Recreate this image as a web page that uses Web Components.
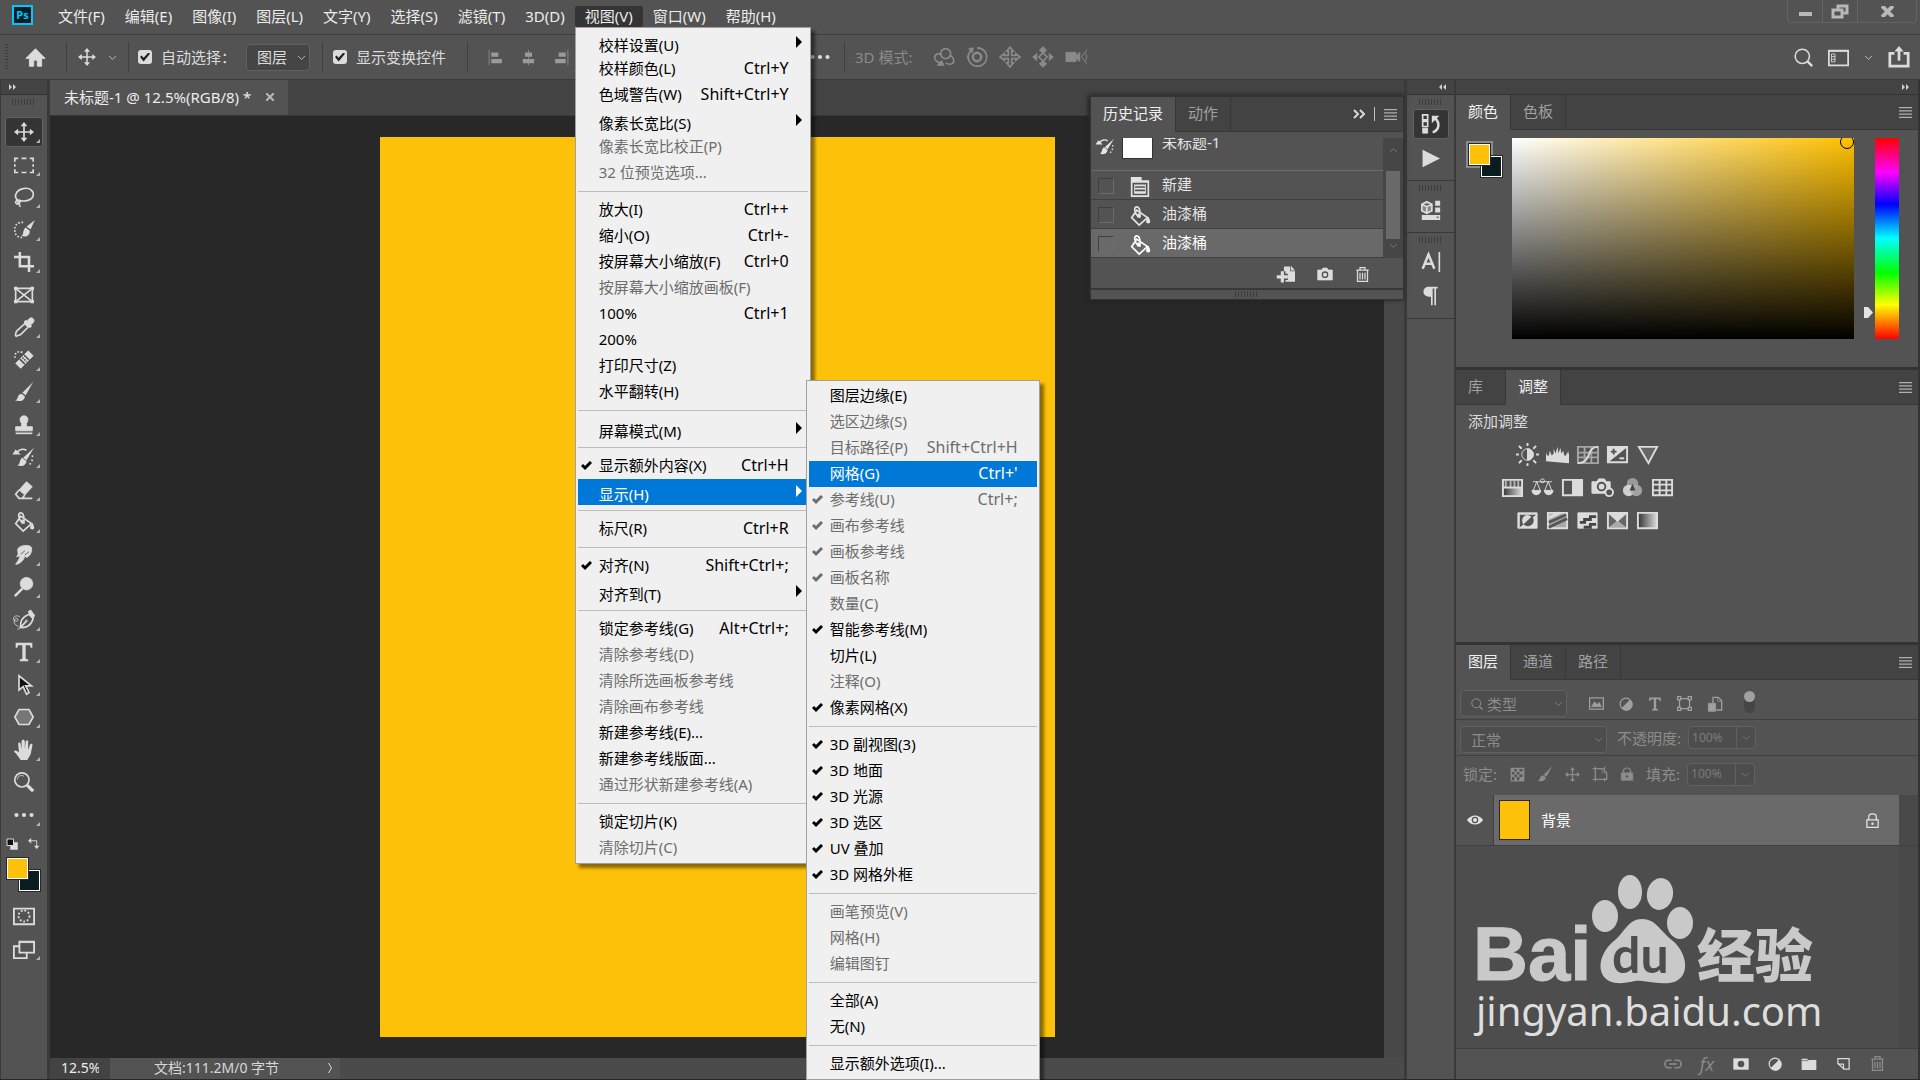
<!DOCTYPE html>
<html lang="zh-CN">
<head>
<meta charset="utf-8">
<title>Photoshop</title>
<style>
    html, body { height: 100%; margin: 0; }
    body {
        background: #282828;
        color: #e4e4e4;
        font: 15px/20px "Noto Sans", "Noto Sans CJK SC", sans-serif;
        overflow: hidden;
    }
</style>
</head>
<body>
<photo-app></photo-app>

<script>
const ICONS = {
    home: `<path fill="currentColor" d="M12 2 1 13h4v9h5v-7h4v7h5v-9h4z"/>`,
    move: `<path d="M12 3v18M3 12h18" stroke-width="2"/><path fill="currentColor" stroke="none" d="m12 0 4 5H8zM12 24l4-5H8zM0 12l5-4v8zM24 12l-5-4v8z"/>`,
    chevron: `<path d="m3 8 9 9 9-9" stroke-width="2"/>`,
    chevronUp: `<path d="m3 16 9-9 9 9" stroke-width="2"/>`,
    chevronRight: `<path d="m9 2 6 10-6 10" stroke-width="2"/>`,
    alignLeft: `<path d="M3 1v22"/><path fill="currentColor" stroke="none" d="M6 5h10v6H6zM6 14h15v6H6z"/>`,
    alignCenter: `<path d="M12 1v22"/><path fill="currentColor" stroke="none" d="M7 5h10v6H7zM4 14h16v6H4z"/>`,
    alignRight: `<path d="M21 1v22"/><path fill="currentColor" stroke="none" d="M8 5h10v6H8zM3 14h15v6H3z"/>`,
    dots: `<g fill="currentColor" stroke="none"><circle cx="3" cy="12" r="2.500"/><circle cx="12" cy="12" r="2.500"/><circle cx="21" cy="12" r="2.500"/></g>`,
    orbit: `<circle cx="14" cy="8" r="6" stroke-width="2"/><path d="M9 9c-6-2-9 1-8 5 1 3 5 5 9 6M19 10c4 2 6 6 4 9-2 2-6 2-9 0" stroke-width="2"/><path fill="currentColor" d="m4 22 5-6 3 6z"/>`,
    roll: `<path d="M5 4a11 11 0 1 0 7-3M1 14v-4" stroke-width="2"/><circle cx="12" cy="12" r="5" stroke-width="3"/><path fill="currentColor" d="m2 2 6-1-2 6z"/>`,
    pan: `<path stroke-width="2" d="m12 0 4 5h-2v5h5V8l5 4-5 4v-2h-5v5h2l-4 5-4-5h2v-5H5v2l-5-4 5-4v2h5V5H8z"/>`,
    slide: `<path d="m12 7 5 5-5 5-5-5z" stroke-width="2"/><path fill="currentColor" stroke="none" d="m12-1 5 5-5 4-5-4zM12 25l5-5-5-4-5 4zM-1 12l6-5v10zM25 12l-6-5v10z"/>`,
    video: `<path fill="currentColor" d="M0 7h11v10H0zM11 11l4-4v10l-4-4z"/><path d="m23 4-6 8 6 8M21 8c2 2 2 6 0 8"/>`,
    search: `<circle cx="10.500" cy="10.500" r="9" stroke-width="2"/><path d="m17 17 6 6" stroke-width="3"/>`,
    workspace: `<path d="M1 4h22v17H1z" stroke-width="2"/><path d="M1 5h22"/><path d="M4 8h4v9H4zM4 11h4M4 14h4"/>`,
    share: `<path d="M7 8H2v14h20V8h-5" stroke-width="3"/><path d="M12 4v12" stroke-width="3"/><path fill="currentColor" stroke="none" d="m12 0 5 6H7z"/>`,
    marquee: `<path d="M1 8V4h4M9 4h6M19 4h4v4M23 11v3M23 17v4h-4M15 21H9M5 21H1v-4M1 14v-3" stroke-width="2"/>`,
    lasso: `<path d="M5 16C-1 12 2 4 11 2c8-2 13 3 12 8-1 6-10 8-17 6" stroke-width="2"/><path d="M5 16c-3 0-4 3-2 4s5-1 4-3-3-1-2 2c1 2 3 3 2 5" stroke-width="2"/>`,
    quick: `<path d="M11 3C4 2 0 7 1 13c0 5 4 8 9 8" stroke-dasharray="2 2" stroke-width="2"/><path fill="currentColor" stroke="none" d="m25 0-5 11-5-3zM14 9l5 4c0 7-6 8-10 6 3-1 1-7 5-10z"/>`,
    crop: `<path d="M7 0v17h17M0 6h18v18" stroke-width="3"/>`,
    frame: `<path d="M2 4h20v16H2z" stroke-width="2"/><path d="m2 4 20 16M22 4 2 20" stroke-width="2"/><path fill="currentColor" stroke="none" d="M0 2h4v4H0zM20 2h4v4h-4zM0 18h4v4H0zM20 18h4v4h-4z"/>`,
    dropper: `<path d="m13 8 4 4-9 9c-2 1-3 1-5 2-1 0-2-1-1-2 0-2 0-3 2-5z" stroke-width="2"/><path fill="currentColor" d="m12 6 2-2 2 1c2-4 5-5 7-3s1 5-3 7l1 2-2 2z"/>`,
    heal: `<path d="M10 3C4 0-1 5 2 11" stroke-dasharray="2 2" stroke-width="2"/><path fill="currentColor" d="m17 1 6 6L8 22l-6-6z"/><g stroke="#535353" stroke-width="2"><path d="m12 6 6 6M7 11l6 6"/><path d="m10 9 5 5" stroke-dasharray="2 1"/></g>`,
    brush: `<path fill="currentColor" stroke="none" d="m23 0-9 16-4-3zM9 14l4 3c0 6-7 7-12 5 5-1 2-7 8-8z"/>`,
    stamp: `<path fill="currentColor" d="M9 10c-3-4-2-9 3-9s6 5 3 9v4h7v5H2v-5h7z"/><path d="M2 22h20" stroke-width="2"/>`,
    history: `<path d="M3 7c4-5 9-5 12-3" stroke-width="2"/><path fill="currentColor" stroke="none" d="m-2 9 4-6 6 6zM24 1l-9 15-4-3zM10 13l5 4c-1 6-7 7-11 5 4-1 2-7 6-9z"/><path d="M22 10c1 5-1 9-5 13" stroke-dasharray="2 3" stroke-width="2"/>`,
    eraser: `<path fill="currentColor" d="m15 2 7 6-9 10-7-6z"/><path d="m6 12-4 5 4 5h4l3-4M6 22h16" stroke-width="2"/>`,
    bucket: `<path d="m8 5 13 9-10 9-9-9zM10 13C4 7 5 1 8 1s4 4 4 8" stroke-width="2"/><path fill="currentColor" stroke="none" d="M9 9h4v5H9zM22 13c3 5 3 8 0 8-4 0-3-4 0-8z"/>`,
    smudge: `<path fill="currentColor" d="M5 4c3-4 14-5 16-1 1 4-1 10-6 12l-2-2c-1 5-4 8-9 10H2c3-4 5-7 5-10l-4 1c4-3 0-7 2-10z"/><path stroke="#535353" d="m8 11 5-4M13 12l5-4"/>`,
    dodge: `<circle cx="15" cy="8" r="7.500" fill="currentColor"/><path d="M10 14 1 23" stroke-width="3"/>`,
    pen: `<path d="M8 21c-1-7 2-13 10-16l5 5c-2 8-8 12-15 11zm0 0 7-8" stroke-width="2"/><circle cx="15" cy="13" r="1"/><path fill="currentColor" d="m17 2 3-2 5 7-3 3z"/><path d="M7 8C1 5-3 10 1 13c4 2 5-3 2-3-4 0-4 7 1 9s3 4 0 4"/>`,
    type: `<path fill="currentColor" stroke="none" d="M2 1h20v6h-2l-1-3h-5v16l3 1v2H7v-2l3-1V4H5L4 7H2z"/>`,
    select: `<path fill="#111" stroke-width="2" d="M6 1v17l5-4 4 9 3-2-4-8h7z"/>`,
    polygon: `<path fill="#777" stroke-width="2" d="m6 3 12 0 5 9-5 9H6l-5-9z"/>`,
    hand: `<path fill="currentColor" stroke="none" d="M8 24c-3-4-5-8-8-10 1-3 4-1 6 1L5 5c0-3 3-2 3 0l1 6V2c0-3 4-3 4 0v9l1-9c1-3 4-2 3 1v9l2-6c1-2 4-2 3 1l-2 10-4 7z"/>`,
    zoom: `<circle cx="9.500" cy="9.500" r="8.500" stroke-width="2"/><path d="M4 9c0-4 4-6 8-4"/><path d="m16 16 7 7" stroke-width="4"/>`,
    mini: `<path fill="currentColor" d="M9 9h14v14H9z"/><path fill="#111" d="M2 2h13v13H2z" stroke-width="2"/>`,
    swap: `<path d="M5 6h14v14" stroke-width="2"/><path fill="currentColor" stroke="none" d="m0 6 7-6v12zM19 24l-6-7h12z"/>`,
    mask: `<path d="M1 4h22v17H1z" stroke-width="2"/><circle cx="12" cy="12" r="6" stroke-dasharray="2 2" stroke-width="2"/>`,
    screen: `<path d="M7 4h16v12H7zM7 9H1v13h14v-5" stroke-width="2"/><path d="M7 5h16"/>`,
    layersUndo: `<path d="M2 1h6v6H2zM2 9h6v6H2z" stroke-width="2"/><path fill="currentColor" d="M2 17h6v6H2z"/><path d="M14 22c8-3 9-11 3-17" stroke-width="3"/><path fill="currentColor" stroke="none" d="M13 2h9l-9 9z"/>`,
    play: `<path fill="currentColor" stroke="none" d="m2 1 22 11L2 23z"/>`,
    cube: `<path fill="#888" stroke-width="2" d="m7 2 6 3v8l-6 3-6-3V5zM1 5l6 3 6-3M7 8v8"/><path fill="currentColor" stroke="none" d="M17 1h6v6h-6zM17 9h6v6h-6zM1 18h22v6H1z"/><path fill="#535353" stroke="none" d="M18 20h4l-2 2z"/>`,
    char: `<path d="m2 20 7-17 7 17M5 14h9" stroke-width="3"/><path d="M22 0v24" stroke-width="2"/>`,
    para: `<path fill="currentColor" stroke="none" d="M3 7c0-4 3-6 6-6h11v2h-6v20h-2V13C6 13 3 11 3 7z"/><path d="M17 2v21" stroke-width="2"/>`,
    doc: `<path fill="currentColor" stroke="none" d="M1 0h13v4h9v20H1z"/><path stroke="#535353" stroke-width="2" d="M4 8h16v13H4zM6 12h12M6 16h12"/>`,
    newDoc: `<path fill="currentColor" stroke="none" d="M10 2h8v6h6v13H10z"/><path fill="currentColor" stroke="none" d="m19 1 5 6h-5z"/><path d="M8 8v14M0 15h15" stroke="#535353" stroke-width="8"/><path d="M8 8v14M1 15h14" stroke-width="4"/>`,
    camera: `<path fill="currentColor" d="M1 6h6l2-3h6l2 3h6v15H1z"/><circle cx="12" cy="13" r="4" stroke="#535353" stroke-width="2"/>`,
    trash: `<path d="M4 6v17h16V6M2 5h20M8 4V1h8v3M8 9v11M12 9v11M16 9v11" stroke-width="2"/>`,
    burger: `<path d="M0 3h24M0 9h24M0 15h24M0 21h24" stroke-width="2"/>`,
    bright: `<circle cx="12" cy="12" r="6"/><path fill="currentColor" d="M12 6a6 6 0 0 1 0 12z"/><path d="M12 0v3M12 21v3M0 12h3M21 12h3M3 3l3 3M18 18l3 3M3 21l3-3M18 6l3-3" stroke-width="2"/>`,
    levels: `<path fill="currentColor" stroke="none" d="M0 19V9l1 4h2l1-5 2 5 2-2V6l2 5 2-7 1 7 2-6 1 6 2-3 1 5h2l1-4 1 3 1-4v13z"/>`,
    curves: `<path opacity=".6" d="M2 4h21v17H2zM9 4v17M16 4v17M2 10h21M2 15h21" stroke-width="2"/><path d="M2 21c15 0 8-17 21-17" stroke-width="2"/>`,
    exposure: `<path d="M2 4h20v16H2z" stroke-width="2"/><path fill="currentColor" d="M2 4h20L2 20z"/><path stroke="#535353" stroke-width="2" d="M5 9h6M8 6v6"/><path d="M14 16h5" stroke-width="2"/>`,
    vibrance: `<path fill="#666" d="M3 4h19l-9 17z" stroke-width="2"/>`,
    hue: `<path fill="url(#g)" d="M2 12h20v9H2z"/><path d="M2 4h20v17H2zM2 12h20" stroke-width="2"/><path d="M5 5v7M10 5v7M14 5v7M18 5v7" stroke-width="2" opacity=".7"/>`,
    balance: `<path d="M2 6h20M6 6 2 16M6 6l4 10M18 6l-4 10M18 6l4 10"/><circle cx="12" cy="5" r="2"/><path fill="currentColor" d="M1 15h9c0 6-9 6-9 0zM14 15h9c0 6-9 6-9 0z"/>`,
    bw: `<path d="M2 4h20v16H2z" stroke-width="2"/><path fill="currentColor" d="M12 4h10v16H12z"/>`,
    photo: `<path fill="currentColor" d="M1 6h5l2-3h6l2 3h4v12H1z"/><circle cx="11" cy="11" r="4" stroke="#535353" stroke-width="2"/><circle cx="19" cy="17" r="4" fill="#535353" stroke-width="2"/>`,
    mixer: `<circle cx="12" cy="8" r="6" fill="#999" stroke="none"/><circle cx="8" cy="15" r="6" fill="#ddd" opacity=".9" stroke="none"/><circle cx="16" cy="15" r="6" fill="#aaa" opacity=".9" stroke="none"/><path fill="#444" stroke="none" d="m12 8 3 7h-6z"/>`,
    lookup: `<path d="M2 4h20v16H2zM9 4v16M16 4v16M2 9h20M2 15h20" stroke-width="2"/>`,
    invert: `<path fill="currentColor" d="M2 20V4h20v16z"/><path fill="#535353" stroke="none" d="M4 6h17L4 19z"/><path fill="currentColor" stroke="none" d="M8 16a5 5 0 0 1 8-8z"/><path fill="#535353" stroke="none" d="M17 8a6 6 0 0 1-9 8z"/>`,
    poster: `<path fill="#aaa" d="M2 4h20v16H2z" stroke-width="2"/><path stroke="#555" d="M3 14 21 6M3 19 22 10" stroke-width="3"/><path d="M3 9 14 4" stroke-width="3"/>`,
    threshold: `<path fill="currentColor" d="M2 4h20v16H2z"/><path stroke="#444" stroke-width="3" d="M4 14h5v-3h6V8h6M8 19h7v-3h6"/>`,
    selective: `<path fill="#666" d="M2 4h20v16H2z" stroke-width="2"/><path fill="#aaa" stroke="none" d="M3 19h18l-9-7z"/><path fill="currentColor" d="M2 4h20L12 13z"/>`,
    gradient: `<path fill="url(#g)" d="M2 4h20v16H2z" stroke-width="2"/>`,
    image: `<path d="M1 3h22v18H1z" stroke-width="2"/><path fill="currentColor" d="m4 17 5-8 4 5 3-4 4 7z"/>`,
    adjust: `<circle cx="12" cy="12" r="10" stroke-width="2"/><path fill="currentColor" d="M19 5A10 10 0 1 1 5 19z"/>`,
    shape: `<path d="M4 4h16v16H4z" stroke-width="2"/><path fill="#535353" stroke-width="2" d="M1 1h5v5H1zM18 1h5v5h-5zM1 18h5v5H1zM18 18h5v5h-5z"/>`,
    smart: `<path d="M9 11V2h8l5 5v14h-8" stroke-width="2"/><path d="M16 2v6h6"/><path fill="currentColor" d="M2 11h11v12H2z"/>`,
    pixels: `<path fill="currentColor" fill-rule="evenodd" stroke="none" d="M1 1h22v22H1zM7 3v4h4V3zM15 3v4h5V3zM3 8v4h4V8zM11 8v4h4V8zM7 12v4h4v-4zM15 12v4h5v-4zM3 16v5h4v-5zM11 16v5h4v-5z"/>`,
    artboard: `<path d="M1 4h15l6 6v10H1M5 1v22M19 1v4M19 18v5" stroke-width="2"/><path d="M15 4v6h7"/>`,
    lock: `<path d="M6 11V7c0-7 12-7 12 0v4" stroke-width="2"/><path fill="currentColor" d="M2 10h20v13H2z"/><circle cx="12" cy="16" r="2" fill="#535353" stroke="none"/>`,
    lockOpen: `<path d="M6 11V6c0-6 12-6 12 0v5M3 11h18v12H3z" stroke-width="2"/><circle cx="12" cy="17" r="2" fill="currentColor" stroke="none"/>`,
    eye: `<path fill="currentColor" stroke="none" d="M0 12C6 3 18 3 24 12 18 21 6 21 0 12z"/><circle cx="12" cy="12" r="5" fill="#535353" stroke="none"/><circle cx="12" cy="12" r="3" fill="currentColor" stroke="none"/>`,
    link: `<path d="M10 7H6a5 5 0 0 0 0 10h4M14 7h4a5 5 0 0 1 0 10h-4M7 12h10" stroke-width="2"/>`,
    addMask: `<path fill="currentColor" d="M1 4h22v16H1z"/><circle cx="12" cy="12" r="5" fill="#535353" stroke="none"/>`,
    folder: `<path fill="currentColor" stroke="none" d="M1 4h9v2h13v15H1z"/><path stroke="#535353" d="M1 7h10"/>`,
    newLayer: `<path d="M3 4h18v17h-8L3 12z" stroke-width="2"/><path d="M3 13h9v8" stroke-width="2"/>`
};

class PsIcon extends HTMLElement {
    constructor(){
        super();
        this.attachShadow({mode: "open"});
    }

    connectedCallback(){
        const size = this.getAttribute("size") || 22;
        this.shadowRoot.innerHTML = `
            <style>
                :host { display: inline-flex; flex: none; }
                svg { display: block; overflow: visible; }
            </style>
            <svg width="${size}" height="${size}" viewBox="0 0 24 24" fill="none" stroke="currentColor" aria-hidden="true">
                <defs><linearGradient id="g"><stop stop-color="#333"/><stop offset="1" stop-color="#ddd"/></linearGradient></defs>
                ${ICONS[this.getAttribute("name")] || ""}
            </svg>`;
    }
}
customElements.define("ps-icon", PsIcon);

/* row of short ticks that marks a draggable edge */
class GripBar extends HTMLElement {
    constructor(){
        super();
        this.attachShadow({mode: "open"}).innerHTML = `
            <style>
                :host {
                    display: block;
                    width: 24px;
                    height: 6px;
                    background: repeating-linear-gradient(90deg, #3c3c3c 0 1px, transparent 1px 3px);
                }
            </style>`;
    }
}
customElements.define("grip-bar", GripBar);

class SwatchPair extends HTMLElement {
    constructor(){
        super();
        this.attachShadow({mode: "open"}).innerHTML = `
            <style>
                :host { display: grid; width: 35px; height: 35px; }
                button {
                    grid-area: 1 / 1;
                    box-sizing: border-box;
                    width: 23px;
                    height: 23px;
                    padding: 0;
                    border: 1px solid #282828;
                    box-shadow: inset 0 0 0 1px #fff;
                }
                .fore { background: #fcc108; z-index: 1; }
                .back { background: #0a1c20; place-self: end; }
                :host([framed]) .fore { outline: 2px solid #8a8a8a; }
                :host([framed]) .back { z-index: 1; clip-path: polygon(11px 0, 100% 0, 100% 100%, 0 100%, 0 11px, 11px 11px); }
            </style>
            <button class="fore" aria-label="foreground"></button>
            <button class="back" aria-label="background"></button>`;
    }
}
customElements.define("swatch-pair", SwatchPair);

class ToolButton extends HTMLElement {
    constructor(){
        super();
        this.attachShadow({mode: "open"});
    }

    connectedCallback(){
        this.shadowRoot.innerHTML = `
            <style>
                :host { display: grid; place-items: center; }
                button {
                    position: relative;
                    display: grid;
                    place-items: center;
                    box-sizing: border-box;
                    width: var(--tool-width, 38px);
                    height: 30px;
                    padding: 0;
                    border: 1px solid transparent;
                    border-radius: 3px;
                    background: none;
                    color: #dcdcdc;
                }
                :host([active]) button { background: #353535; border-color: #616161; }
                :host([more]) button::after {
                    content: "";
                    position: absolute;
                    right: 2px;
                    bottom: 3px;
                    border: 2px solid transparent;
                    border-right-color: #b5b5b5;
                    border-bottom-color: #b5b5b5;
                }
            </style>
            <button aria-label="${this.getAttribute("icon")}"><ps-icon name="${this.getAttribute("icon")}" size="${this.getAttribute("size") || 20}"></ps-icon></button>`;
    }
}
customElements.define("tool-button", ToolButton);

class MenuItem extends HTMLElement {
    constructor(){
        super();
        this.attachShadow({mode: "open"});
    }

    connectedCallback(){
        const off = this.hasAttribute("off") ? "disabled" : "";
        this.shadowRoot.innerHTML = `
            <style>
                :host { display: block; }
                button {
                    display: grid;
                    grid-template-columns: 14px 1fr auto 10px;
                    align-items: center;
                    column-gap: 4px;
                    width: 100%;
                    height: 26px;
                    padding: 0 5px 0 3px;
                    border: 0;
                    background: none;
                    color: #000;
                    font: inherit;
                    text-align: left;
                    white-space: nowrap;
                }
                button:disabled { color: #6d6d6d; }
                :host([active]) button { background: #0078d7; color: #fff; }
                .label, .key { padding-bottom: 2px; }
                :host([sub]) .label { padding: 3px 0 0; }
                .key { font-size: 16px; }
                svg { display: block; }
                .arrow { justify-self: end; }
            </style>
            <button role="menuitem" ${off}>
                <span>${this.hasAttribute("on") ? `<svg width="11" height="10" viewBox="0 0 11 10" fill="none" stroke="currentColor" stroke-width="3"><path d="m1 4 3 3 6-6"/></svg>` : ""}</span>
                <span class="label"><slot></slot></span>
                <span class="key">${this.getAttribute("key") || ""}</span>
                <span class="arrow">${this.hasAttribute("sub") ? `<svg width="7" height="14"><path fill="currentColor" d="m0 0 6 6-6 6z"/></svg>` : ""}</span>
            </button>`;
    }
}
customElements.define("menu-item", MenuItem);

class MenuLine extends HTMLElement {
    constructor(){
        super();
        this.attachShadow({mode: "open"}).innerHTML = `
            <style>
                :host { display: block; padding: 5px 0; }
                div { height: 1px; background: #bdbdbd; }
            </style>
            <div></div>`;
    }
}
customElements.define("menu-line", MenuLine);

class MenuPopup extends HTMLElement {
    constructor(){
        super();
        this.attachShadow({mode: "open"}).innerHTML = `
            <style>
                :host {
                    display: block;
                    box-sizing: border-box;
                    width: 236px;
                    padding: 2px;
                    border: 1px solid #a0a0a0;
                    background: #f0f0f0;
                    box-shadow: 4px 4px 3px rgba(0, 0, 0, 0.45);
                }
            </style>
            <slot></slot>`;
    }
}
customElements.define("menu-popup", MenuPopup);

class MenuBar extends HTMLElement {
    constructor(){
        super();
        this.attachShadow({mode: "open"});
    }

    connectedCallback(){
        const items = ["文件(F)", "编辑(E)", "图像(I)", "图层(L)", "文字(Y)", "选择(S)", "滤镜(T)", "3D(D)", "视图(V)", "窗口(W)", "帮助(H)"];
        this.shadowRoot.innerHTML = `
            <style>
                :host {
                    display: flex;
                    align-items: flex-start;
                    height: 34px;
                    padding-left: 12px;
                    background: #535353;
                    border-bottom: 1px solid #3f3f3f;
                }
                .logo {
                    box-sizing: border-box;
                    width: 21px;
                    height: 20px;
                    margin: 5px 15px 0 0;
                    border: 2px solid #00c8ff;
                    background: #001d26;
                    color: #00c8ff;
                    font: bold 11px/16px "Open Sans", sans-serif;
                    text-align: center;
                }
                nav { display: flex; padding-top: 6px; }
                .entry { position: relative; }
                .entry button {
                    height: 21px;
                    padding: 0 10px 2px;
                    border: 0;
                    border-radius: 2px;
                    background: none;
                    color: #ececec;
                    font: inherit;
                    white-space: nowrap;
                }
                .open > button { background: #353535; }
                .view, .show { position: absolute; z-index: 10; }
                .view { top: 100%; left: 0; }
                .show { top: 352px; left: 230px; width: 234px; }
                .window { display: flex; margin: 0 3px 0 auto; border: 1px solid #636363; border-top: 0; border-radius: 0 0 4px 4px; }
                .window button { display: grid; place-items: center; height: 22px; width: 35px; padding: 0; border: 0; border-right: 1px solid #636363; background: none; color: #b8b8b8; }
                .window button:last-child { width: 58px; border-right: 0; }
            </style>
            <div class="logo">Ps</div>
            <nav>
                ${items.map(text => `<div class="entry ${text === "视图(V)" ? "open" : ""}"><button>${text}</button></div>`).join("")}
            </nav>
            <div class="window">
                <button aria-label="minimize"><svg width="13" height="14"><path fill="currentColor" d="M0 8h13v4H0z"/></svg></button>
                <button aria-label="restore"><svg width="18" height="15" fill="none" stroke="currentColor" stroke-width="3"><path d="M7 5V2h9v7h-4M2 6h9v7H2z"/></svg></button>
                <button aria-label="close"><svg width="13" height="11" stroke="currentColor" stroke-width="4"><path d="m1 0 11 11M12 0 1 11"/></svg></button>
            </div>`;
        this.shadowRoot.querySelector(".open").insertAdjacentHTML("beforeend", `
            <menu-popup class="view" role="menu">
                <menu-item sub>校样设置(U)</menu-item>
                <menu-item key="Ctrl+Y">校样颜色(L)</menu-item>
                <menu-item key="Shift+Ctrl+Y">色域警告(W)</menu-item>
                <menu-item sub>像素长宽比(S)</menu-item>
                <menu-item off>像素长宽比校正(P)</menu-item>
                <menu-item off>32 位预览选项...</menu-item>
                <menu-line></menu-line>
                <menu-item key="Ctrl++">放大(I)</menu-item>
                <menu-item key="Ctrl+-">缩小(O)</menu-item>
                <menu-item key="Ctrl+0">按屏幕大小缩放(F)</menu-item>
                <menu-item off>按屏幕大小缩放画板(F)</menu-item>
                <menu-item key="Ctrl+1">100%</menu-item>
                <menu-item>200%</menu-item>
                <menu-item>打印尺寸(Z)</menu-item>
                <menu-item>水平翻转(H)</menu-item>
                <menu-line></menu-line>
                <menu-item sub>屏幕模式(M)</menu-item>
                <menu-line></menu-line>
                <menu-item on key="Ctrl+H">显示额外内容(X)</menu-item>
                <menu-item sub active>显示(H)</menu-item>
                <menu-line></menu-line>
                <menu-item key="Ctrl+R">标尺(R)</menu-item>
                <menu-line></menu-line>
                <menu-item on key="Shift+Ctrl+;">对齐(N)</menu-item>
                <menu-item sub>对齐到(T)</menu-item>
                <menu-line></menu-line>
                <menu-item key="Alt+Ctrl+;">锁定参考线(G)</menu-item>
                <menu-item off>清除参考线(D)</menu-item>
                <menu-item off>清除所选画板参考线</menu-item>
                <menu-item off>清除画布参考线</menu-item>
                <menu-item>新建参考线(E)...</menu-item>
                <menu-item>新建参考线版面...</menu-item>
                <menu-item off>通过形状新建参考线(A)</menu-item>
                <menu-line></menu-line>
                <menu-item>锁定切片(K)</menu-item>
                <menu-item off>清除切片(C)</menu-item>
                <menu-popup class="show" role="menu">
                    <menu-item>图层边缘(E)</menu-item>
                    <menu-item off>选区边缘(S)</menu-item>
                    <menu-item off key="Shift+Ctrl+H">目标路径(P)</menu-item>
                    <menu-item active key="Ctrl+'">网格(G)</menu-item>
                    <menu-item on off key="Ctrl+;">参考线(U)</menu-item>
                    <menu-item on off>画布参考线</menu-item>
                    <menu-item on off>画板参考线</menu-item>
                    <menu-item on off>画板名称</menu-item>
                    <menu-item off>数量(C)</menu-item>
                    <menu-item on>智能参考线(M)</menu-item>
                    <menu-item>切片(L)</menu-item>
                    <menu-item off>注释(O)</menu-item>
                    <menu-item on>像素网格(X)</menu-item>
                    <menu-line></menu-line>
                    <menu-item on>3D 副视图(3)</menu-item>
                    <menu-item on>3D 地面</menu-item>
                    <menu-item on>3D 光源</menu-item>
                    <menu-item on>3D 选区</menu-item>
                    <menu-item on>UV 叠加</menu-item>
                    <menu-item on>3D 网格外框</menu-item>
                    <menu-line></menu-line>
                    <menu-item off>画笔预览(V)</menu-item>
                    <menu-item off>网格(H)</menu-item>
                    <menu-item off>编辑图钉</menu-item>
                    <menu-line></menu-line>
                    <menu-item>全部(A)</menu-item>
                    <menu-item>无(N)</menu-item>
                    <menu-line></menu-line>
                    <menu-item>显示额外选项(I)...</menu-item>
                </menu-popup>
            </menu-popup>`);
    }
}
customElements.define("menu-bar", MenuBar);

class DropDown extends HTMLElement {
    constructor(){
        super();
        this.attachShadow({mode: "open"});
    }

    connectedCallback(){
        this.shadowRoot.innerHTML = `
            <style>
                :host { display: grid; align-items: center; }
                select {
                    grid-area: 1 / 1;
                    appearance: none;
                    width: 100%;
                    height: 27px;
                    padding: 0 20px 0 var(--indent, 10px);
                    border: 1px solid #616161;
                    border-radius: 4px;
                    background: var(--field, #454545);
                    color: inherit;
                    font: inherit;
                }
                ps-icon { grid-area: 1 / 1; justify-self: end; margin-right: 4px; pointer-events: none; }
                ps-icon.lead { justify-self: start; margin-left: 11px; }
            </style>
            <select aria-label="${this.getAttribute("label")}"><option>${this.getAttribute("value")}</option></select>
            ${this.hasAttribute("icon") ? `<ps-icon class="lead" name="${this.getAttribute("icon")}" size="12"></ps-icon>` : ""}
            <ps-icon name="chevron" size="9"></ps-icon>`;
    }
}
customElements.define("drop-down", DropDown);

class CheckBox extends HTMLElement {
    constructor(){
        super();
        this.attachShadow({mode: "open"}).innerHTML = `
            <style>
                :host { display: block; white-space: nowrap; }
                label { display: flex; align-items: center; gap: 9px; }
                input {
                    appearance: none;
                    display: grid;
                    place-items: center;
                    width: 14px;
                    height: 14px;
                    margin: 0;
                    border-radius: 3px;
                    background: #dcdcdc;
                }
                input::before {
                    content: "";
                    width: 10px;
                    height: 9px;
                    background: #222;
                    clip-path: polygon(0 50%, 16% 34%, 36% 58%, 84% 0, 100% 14%, 36% 100%);
                }
            </style>
            <label><input type="checkbox" checked><slot></slot></label>`;
    }
}
customElements.define("check-box", CheckBox);

class OptionsBar extends HTMLElement {
    constructor(){
        super();
        this.attachShadow({mode: "open"}).innerHTML = `
            <style>
                :host {
                    display: flex;
                    align-items: center;
                    height: 44px;
                    padding: 0 10px 0 5px;
                    background: #535353;
                    border-bottom: 1px solid #3a3a3a;
                    color: #dcdcdc;
                }
                grip-bar { width: 3px; height: 27px; background: repeating-linear-gradient(#3c3c3c 0 1px, transparent 1px 3px); }
                hr { width: 1px; height: 30px; margin: 0; border: 0; background: #404040; }
                button { display: grid; place-items: center; padding: 0; border: 0; background: none; color: inherit; }
                .group { display: flex; align-items: center; box-sizing: border-box; }
                .home { width: 58px; justify-content: center; padding-right: 4px; }
                .tool { width: 61px; gap: 12px; padding-left: 11px; }
                .auto { width: 193px; padding-left: 9px; gap: 10px; }
                .auto drop-down { width: 64px; }
                .show { width: 144px; padding-left: 10px; }
                .align { width: 376px; gap: 16px; padding-left: 19px; color: #9a9a9a; }
                .align .more { margin: 0 14px 0 auto; color: #dcdcdc; }
                .mode { gap: 13px; padding-left: 10px; color: #8a8a8a; white-space: nowrap; }
                .mode span { margin-right: 9px; }
                .right { margin-left: auto; gap: 15px; }
            </style>
            <grip-bar></grip-bar>
            <div class="group home"><button aria-label="home"><ps-icon name="home" size="21"></ps-icon></button></div>
            <hr>
            <div class="group tool"><ps-icon name="move" size="18"></ps-icon><ps-icon name="chevron" size="9"></ps-icon></div>
            <hr>
            <div class="group auto"><check-box>自动选择：</check-box><drop-down label="自动选择" value="图层"></drop-down></div>
            <hr>
            <div class="group show"><check-box>显示变换控件</check-box></div>
            <hr>
            <div class="group align">
                <button aria-label="left"><ps-icon name="alignLeft" size="17"></ps-icon></button>
                <button aria-label="center"><ps-icon name="alignCenter" size="17"></ps-icon></button>
                <button aria-label="right"><ps-icon name="alignRight" size="17"></ps-icon></button>
                <button class="more" aria-label="more"><ps-icon name="dots" size="20"></ps-icon></button>
            </div>
            <hr>
            <div class="group mode">
                <span>3D 模式:</span>
                <ps-icon name="orbit" size="20"></ps-icon>
                <ps-icon name="roll" size="20"></ps-icon>
                <ps-icon name="pan" size="20"></ps-icon>
                <ps-icon name="slide" size="20"></ps-icon>
                <ps-icon name="video" size="22"></ps-icon>
            </div>
            <div class="group right">
                <button aria-label="search"><ps-icon name="search" size="19"></ps-icon></button>
                <button aria-label="workspace"><ps-icon name="workspace" size="21"></ps-icon></button>
                <ps-icon name="chevron" size="9"></ps-icon>
                <button aria-label="share"><ps-icon name="share" size="22"></ps-icon></button>
            </div>`;
    }
}
customElements.define("options-bar", OptionsBar);

class DockHead extends HTMLElement {
    constructor(){
        super();
        this.attachShadow({mode: "open"}).innerHTML = `
            <style>
                :host { display: flex; align-items: center; height: 14px; padding: 0 8px; background: #434343; color: #d0d0d0; border-bottom: 1px solid #333; }
                :host([end]) { justify-content: flex-end; }
                :host([back]) svg { transform: scaleX(-1); }
            </style>
            <svg width="8" height="6" fill="currentColor"><path d="m0 0 3 3-3 3zM4 0l3 3-3 3z"/></svg>`;
    }
}
customElements.define("dock-head", DockHead);

class ToolDock extends HTMLElement {
    constructor(){
        super();
        const tools = ["move", "marquee", "lasso", "quick", "crop", "frame", "dropper", "heal", "brush", "stamp", "history",
            "eraser", "bucket", "smudge", "dodge", "pen", "type", "select", "polygon", "hand", "zoom", "dots"];
        const plain = ["frame", "zoom"];
        this.attachShadow({mode: "open"}).innerHTML = `
            <style>
                :host { display: block; width: 46px; border: solid #3a3a3a; border-width: 0 3px 0 1px; background: #535353; color: #dcdcdc; }
                grip-bar { margin: 4px auto 11px; }
                .tools { display: grid; grid-template-rows: repeat(22, 1fr); height: 715px; }
                .row { display: flex; gap: 10px; padding: 7px 0 7px 5px; }
                swatch-pair { margin: 0 0 9px 5px; }
                .modes { display: grid; gap: 3px; }
            </style>
            <dock-head></dock-head>
            <grip-bar></grip-bar>
            <div class="tools">
                ${tools.map((name, i) => `<tool-button icon="${name}" ${i === 0 ? "active" : ""} ${plain.includes(name) ? "" : "more"}></tool-button>`).join("")}
            </div>
            <div class="row"><ps-icon name="mini" size="12"></ps-icon><ps-icon name="swap" size="11"></ps-icon></div>
            <swatch-pair></swatch-pair>
            <div class="modes">
                <tool-button icon="mask" size="22"></tool-button>
                <tool-button icon="screen" size="22" more></tool-button>
            </div>`;
    }
}
customElements.define("tool-dock", ToolDock);

class PanelTabs extends HTMLElement {
    constructor(){
        super();
        this.attachShadow({mode: "open"});
    }

    connectedCallback(){
        const active = this.getAttribute("active");
        const tabs = this.getAttribute("tabs").split(",");
        this.shadowRoot.innerHTML = `
            <style>
                :host { display: flex; height: 35px; background: #434343; }
                button {
                    min-width: 50px;
                    padding: 0 12px 2px;
                    border: 0;
                    border-right: 1px solid #383838;
                    border-bottom: 1px solid #383838;
                    background: none;
                    color: #a0a0a0;
                    font: inherit;
                    text-align: left;
                }
                button[aria-selected=true] { background: #535353; border-bottom-color: #535353; color: #f0f0f0; }
                div { display: flex; flex: 1; align-items: center; justify-content: flex-end; gap: 9px; padding-right: 6px; border-bottom: 1px solid #383838; color: #b0b0b0; }
            </style>
            ${tabs.map(tab => `<button role="tab" aria-selected="${tab === active}">${tab}</button>`).join("")}
            <div><slot></slot><ps-icon name="burger" size="13"></ps-icon></div>`;
    }
}
customElements.define("panel-tabs", PanelTabs);

class HistoryRow extends HTMLElement {
    constructor(){
        super();
        this.attachShadow({mode: "open"});
    }

    connectedCallback(){
        this.shadowRoot.innerHTML = `
            <style>
                :host { display: flex; align-items: center; height: 28px; border-bottom: 1px solid #404040; }
                :host([active]) { background: #696969; color: #fff; }
                input { appearance: none; box-sizing: border-box; width: 16px; height: 16px; margin: 2px 16px 0 7px; border: 1px solid #6c6c6c; border-top-color: #404040; border-left-color: #404040; }
                ps-icon { margin-top: 3px; }
                span { margin: 0 0 3px 12px; }
            </style>
            <input type="checkbox" aria-label="source">
            <ps-icon name="${this.getAttribute("icon")}" size="20"></ps-icon>
            <span><slot></slot></span>`;
    }
}
customElements.define("history-row", HistoryRow);

class HistoryPanel extends HTMLElement {
    constructor(){
        super();
        this.attachShadow({mode: "open"}).innerHTML = `
            <style>
                :host { display: block; box-sizing: border-box; width: 314px; border: 1px solid #333; background: #535353; box-shadow: 0 -2px 4px #333, -2px 0 4px #222; }
                .body { display: flex; margin-top: 6px; }
                .list { flex: 1; }
                .snap { display: flex; align-items: flex-start; height: 32px; padding-left: 6px; overflow: hidden; border-bottom: 1px solid #6c6c6c; }
                .thumb { width: 29px; height: 20px; margin: 0 9px 0 8px; border: 1px solid #333; border-top: 0; background: #fff; }
                .snap span { margin-top: -6px; }
                .bar { display: flex; flex-direction: column; align-items: center; justify-content: space-between; width: 20px; background: #464646; color: #8a8a8a; padding: 8px 0; box-sizing: border-box; }
                .bar i { width: 14px; height: 68px; margin-top: 13px; background: #696969; }
                footer { display: flex; align-items: center; justify-content: flex-end; gap: 22px; box-sizing: border-box; height: 32px; padding: 2px 33px 0 0; border-bottom: 2px solid #383838; color: #dcdcdc; }
                footer button { display: grid; padding: 0; border: 0; background: none; color: inherit; }
                grip-bar { margin: 1px auto 2px; }
            </style>
            <panel-tabs tabs="历史记录,动作" active="历史记录"><svg width="12" height="10" fill="none" stroke="#d8d8d8" stroke-width="2"><path d="m1 1 4 4-4 4M7 1l4 4-4 4"/></svg><svg width="1" height="14"><path fill="#c0c0c0" d="M0 0h1v14H0z"/></svg></panel-tabs>
            <div class="body">
                <div class="list">
                    <div class="snap"><ps-icon name="history" size="17"></ps-icon><div class="thumb"></div><span>未标题-1</span></div>
                    <history-row icon="doc">新建</history-row>
                    <history-row icon="bucket">油漆桶</history-row>
                    <history-row icon="bucket" active>油漆桶</history-row>
                </div>
                <div class="bar"><ps-icon name="chevronUp" size="9"></ps-icon><i></i><ps-icon name="chevron" size="9"></ps-icon></div>
            </div>
            <footer>
                <button aria-label="new document"><ps-icon name="newDoc" size="19"></ps-icon></button>
                <button aria-label="snapshot"><ps-icon name="camera" size="16"></ps-icon></button>
                <button aria-label="delete"><ps-icon name="trash" size="15"></ps-icon></button>
            </footer>
            <grip-bar></grip-bar>`;
    }
}
customElements.define("history-panel", HistoryPanel);

class WorkArea extends HTMLElement {
    constructor(){
        super();
        this.attachShadow({mode: "open"}).innerHTML = `
            <style>
                :host { position: relative; display: grid; grid-template-rows: 36px 1fr 21px; min-width: 0; background: #282828; }
                .tabs { display: flex; background: #434343; border-bottom: 1px solid #383838; }
                .tab { display: flex; align-items: center; justify-content: space-between; box-sizing: border-box; width: 238px; padding: 0 14px 2px; background: #535353; color: #ececec; white-space: nowrap; }
                .tab button { padding: 0; border: 0; background: none; color: #b8b8b8; }
                .canvas { display: grid; grid-template-columns: 1fr 20px; }
                .art { place-self: center; width: 675px; height: 900px; background: #fcc108; }
                .scroll { background: #484848; }
                .status { display: flex; align-items: center; background: #4b4b4b; white-space: nowrap; }
                .zoom { box-sizing: border-box; align-self: stretch; width: 60px; padding: 0 11px 2px; border: 0; background: #434343; color: #ececec; font: inherit; font-size: 14px; }
                .doc { display: flex; align-items: center; justify-content: space-between; box-sizing: border-box; align-self: stretch; width: 230px; padding: 0 4px 2px 44px; background: #535353; color: #d8d8d8; font-size: 14px; }
                history-panel { position: absolute; top: 16px; right: 0; }
            </style>
            <div class="tabs"><div class="tab"><span>未标题-1 @ 12.5%(RGB/8) *</span><button aria-label="close tab"><svg width="8" height="8" stroke="currentColor" stroke-width="2"><path d="m0 0 8 8M8 0 0 8"/></svg></button></div></div>
            <div class="canvas"><div class="art"></div><div class="scroll"></div></div>
            <div class="status"><input class="zoom" aria-label="zoom" value="12.5%"><div class="doc"><span>文档:111.2M/0 字节</span><ps-icon name="chevronRight" size="12"></ps-icon></div></div>
            <history-panel></history-panel>`;
    }
}
customElements.define("work-area", WorkArea);

class IconDock extends HTMLElement {
    constructor(){
        super();
        this.attachShadow({mode: "open"}).innerHTML = `
            <style>
                :host { display: block; width: 47px; border: solid #3a3a3a; border-width: 0 2px 0 3px; background: #535353; --tool-width: 36px; }
                section { display: grid; justify-items: center; row-gap: 4px; padding: 4px 0 7px; border-bottom: 1px solid #383838; }
            </style>
            <dock-head end back></dock-head>
            <section>
                <grip-bar></grip-bar>
                <tool-button icon="layersUndo" active></tool-button>
                <tool-button icon="play" size="19"></tool-button>
            </section>
            <section>
                <grip-bar></grip-bar>
                <tool-button icon="cube" size="20"></tool-button>
            </section>
            <section>
                <grip-bar></grip-bar>
                <tool-button icon="char" size="20"></tool-button>
                <tool-button icon="para" size="20"></tool-button>
            </section>`;
    }
}
customElements.define("icon-dock", IconDock);

class ColorPanel extends HTMLElement {
    constructor(){
        super();
        this.attachShadow({mode: "open"}).innerHTML = `
            <style>
                :host { display: block; background: #535353; }
                .body { display: flex; padding: 8px 19px 28px 12px; }
                swatch-pair { margin: 5px 9px 0 0; }
                .field {
                    position: relative;
                    flex: 1;
                    height: 201px;
                    overflow: hidden;
                    background: linear-gradient(transparent, #000), linear-gradient(90deg, #fff, #ffc000);
                }
                .field i { position: absolute; right: 0; top: -3px; width: 12px; height: 12px; border: 1px solid #000; border-radius: 50%; }
                input {
                    appearance: none;
                    writing-mode: vertical-lr;
                    width: 9px;
                    height: 201px;
                    margin: 0 2px 0 10px;
                    background: none;
                }
                input::-webkit-slider-thumb {
                    appearance: none;
                    width: 9px;
                    height: 11px;
                    background: #e4e4e4;
                    clip-path: polygon(0 0, 45% 0, 100% 50%, 45% 100%, 0 100%);
                }
                .hue { width: 24px; height: 201px; background: linear-gradient(#f00, #f0f 17%, #00f 33%, #0ff 50%, #0f0 67%, #ff0 83%, #f00); }
            </style>
            <panel-tabs tabs="颜色,色板" active="颜色"></panel-tabs>
            <div class="body">
                <swatch-pair framed></swatch-pair>
                <div class="field"><i></i></div>
                <input type="range" min="0" max="100" value="89" aria-label="hue">
                <div class="hue"></div>
            </div>`;
    }
}
customElements.define("color-panel", ColorPanel);

class AdjustPanel extends HTMLElement {
    constructor(){
        super();
        const rows = [
            ["bright", "levels", "curves", "exposure", "vibrance"],
            ["hue", "balance", "bw", "photo", "mixer", "lookup"],
            ["invert", "poster", "threshold", "selective", "gradient"]
        ];
        this.attachShadow({mode: "open"}).innerHTML = `
            <style>
                :host { display: block; background: #535353; color: #dcdcdc; }
                .body { min-height: 237px; box-sizing: border-box; padding: 6px 12px; }
                .row { display: flex; gap: 7px; height: 33px; align-items: center; padding-left: 33px; }
                .row.inset { padding-left: 48px; }
                p { margin: 0 0 8px; }
                button { padding: 0; border: 0; background: none; color: inherit; }
            </style>
            <panel-tabs tabs="库,调整" active="调整"></panel-tabs>
            <div class="body">
                <p>添加调整</p>
                ${rows.map(row => `<div class="row ${row.length === 5 ? "inset" : ""}">${row.map(name => `<button aria-label="${name}"><ps-icon name="${name}" size="23"></ps-icon></button>`).join("")}</div>`).join("")}
            </div>`;
    }
}
customElements.define("adjust-panel", AdjustPanel);

class PercentField extends HTMLElement {
    constructor(){
        super();
        this.attachShadow({mode: "open"});
    }

    connectedCallback(){
        this.shadowRoot.innerHTML = `
            <style>
                :host { display: block; }
                label { display: flex; align-items: center; gap: 7px; white-space: nowrap; }
                .box { display: flex; box-sizing: border-box; width: 68px; height: 23px; border: 1px solid #616161; border-radius: 4px; background: #4d4d4d; }
                input { box-sizing: border-box; width: 48px; padding: 0 3px; border: 0; border-right: 1px solid #616161; background: none; color: #7c7c7c; font: inherit; font-size: 12px; }
                button { flex: 1; display: grid; place-items: center; padding: 0; border: 0; background: none; color: #7c7c7c; }
            </style>
            <label><slot></slot><span class="box"><input value="100%"><button aria-label="open"><ps-icon name="chevron" size="9"></ps-icon></button></span></label>`;
    }
}
customElements.define("percent-field", PercentField);

class WaterMark extends HTMLElement {
    constructor(){
        super();
        this.attachShadow({mode: "open"}).innerHTML = `
            <style>
                :host { display: block; }
                svg { display: block; overflow: visible; }
            </style>
            <svg width="350" height="170" fill="#c9c9c9">
                <text x="2" y="102" font-family="Liberation Sans, Arial, sans-serif" font-weight="bold" font-size="76" stroke="#c9c9c9">Bai</text>
                <ellipse cx="134" cy="38" rx="13" ry="16"/>
                <ellipse cx="159" cy="14" rx="12" ry="17"/>
                <ellipse cx="189" cy="16" rx="13" ry="16" transform="rotate(10 189 16)"/>
                <ellipse cx="209" cy="45" rx="13" ry="16"/>
                <path d="M171 41c-14 0-17 13-27 21-19 15-20 40 1 43 12 1 18-3 26-2 12 1 22 4 32 1 17-6 13-29-1-41-13-10-17-22-31-22z"/>
                <text x="141" y="95" font-family="Lato, sans-serif" font-weight="bold" font-size="50" fill="#4d4d4d">du</text>
                <text x="226" y="99" font-family="Noto Sans CJK SC, sans-serif" font-weight="900" font-size="58">经验</text>
                <text x="5" y="148" font-family="Noto Sans, sans-serif" font-size="40" fill="#dedede">jingyan.baidu.com</text>
            </svg>`;
    }
}
customElements.define("water-mark", WaterMark);

class LayersPanel extends HTMLElement {
    constructor(){
        super();
        this.attachShadow({mode: "open"}).innerHTML = `
            <style>
                :host { display: flex; flex-direction: column; flex: 1; background: #535353; color: #8c8c8c; }
                .bar { display: flex; align-items: center; box-sizing: border-box; height: 36px; padding-left: 4px; border-bottom: 1px solid #404040; --field: #4d4d4d; }
                .filter { height: 40px; padding-top: 8px; gap: 15px; color: #a0a0a0; }
                .filter drop-down { --indent: 26px; width: 107px; margin-right: 7px; color: #8c8c8c; }
                .filter button, .lock button, footer button { display: grid; place-items: center; padding: 0; border: 0; background: none; color: inherit; }
                .filter .toggle { align-items: start; width: 11px; height: 22px; margin: 0 0 4px 6px; border-radius: 6px; background: #464646; }
                .toggle::before { content: ""; width: 11px; height: 11px; border-radius: 6px; background: #a0a0a0; }
                .blend { align-items: flex-start; padding-top: 6px; }
                .blend drop-down { width: 147px; margin-right: 10px; }
                .lock { height: 39px; gap: 12px; border-bottom: 0; padding: 0 0 3px 7px; }
                .lock span { margin-right: 1px; }
                .layer { display: grid; grid-template-columns: 38px 1fr 19px; height: 50px; border-bottom: 1px solid #404040; color: #fff; }
                .eye { display: grid; place-items: center; border: 0; border-right: 1px solid #404040; background: none; color: #e4e4e4; padding: 0; }
                .name { display: flex; align-items: center; gap: 11px; padding: 0 19px 0 5px; background: #6a6a6a; }
                .name i { width: 29px; height: 38px; border: 1px solid #282828; background: #fcc108; }
                .name ps-icon { margin-left: auto; color: #e4e4e4; }
                .side { background: #494949; }
                .rest { display: flex; flex: 1; align-items: flex-start; padding: 32px 0 0 15px; background: linear-gradient(#494949, #494949) right / 19px 100% no-repeat #4d4d4d; }
                footer { display: flex; align-items: center; justify-content: flex-end; gap: 16px; box-sizing: border-box; height: 31px; padding: 0 32px 1px 0; border-top: 1px solid #404040; color: #dcdcdc; }
                footer button { width: 18px; }
                footer .dim { color: #8c8c8c; }
                footer .fx { font: italic 18px/20px "Open Sans", sans-serif; }
            </style>
            <panel-tabs tabs="图层,通道,路径" active="图层"></panel-tabs>
            <div class="bar filter">
                <drop-down label="类型" value="类型" icon="search"></drop-down>
                <button aria-label="pixel"><ps-icon name="image" size="15"></ps-icon></button>
                <button aria-label="adjustment"><ps-icon name="adjust" size="14"></ps-icon></button>
                <button aria-label="type"><ps-icon name="type" size="14"></ps-icon></button>
                <button aria-label="shape"><ps-icon name="shape" size="15"></ps-icon></button>
                <button aria-label="smart object"><ps-icon name="smart" size="16"></ps-icon></button>
                <button class="toggle" aria-label="filter"></button>
            </div>
            <div class="bar blend">
                <drop-down label="混合模式" value="正常"></drop-down>
                <percent-field>不透明度:</percent-field>
            </div>
            <div class="bar lock">
                <span>锁定:</span>
                <button aria-label="lock pixels"><ps-icon name="pixels" size="15"></ps-icon></button>
                <button aria-label="lock paint"><ps-icon name="brush" size="16"></ps-icon></button>
                <button aria-label="lock position"><ps-icon name="move" size="15"></ps-icon></button>
                <button aria-label="lock artboard"><ps-icon name="artboard" size="16"></ps-icon></button>
                <button aria-label="lock all"><ps-icon name="lock" size="14"></ps-icon></button>
                <percent-field>填充:</percent-field>
            </div>
            <div class="layer">
                <button class="eye" aria-label="visible"><ps-icon name="eye" size="16"></ps-icon></button>
                <div class="name"><i></i><span>背景</span><ps-icon name="lockOpen" size="15"></ps-icon></div>
                <div class="side"></div>
            </div>
            <div class="rest"><water-mark></water-mark></div>
            <footer>
                <button class="dim" aria-label="link"><ps-icon name="link" size="18"></ps-icon></button>
                <button class="dim fx">fx</button>
                <button aria-label="mask"><ps-icon name="addMask" size="16"></ps-icon></button>
                <button aria-label="adjustment"><ps-icon name="adjust" size="14"></ps-icon></button>
                <button aria-label="group"><ps-icon name="folder" size="16"></ps-icon></button>
                <button aria-label="new"><ps-icon name="newLayer" size="15"></ps-icon></button>
                <button class="dim" aria-label="delete"><ps-icon name="trash" size="15"></ps-icon></button>
            </footer>`;
    }
}
customElements.define("layers-panel", LayersPanel);

class PhotoApp extends HTMLElement {
    constructor(){
        super();
        this.attachShadow({mode: "open"}).innerHTML = `
            <style>
                :host { display: grid; grid-template-rows: auto auto 1fr; box-sizing: border-box; height: 100vh; padding-bottom: 2px; }
                main { display: grid; grid-template-columns: auto 1fr auto 464px; min-height: 0; }
                aside { display: flex; flex-direction: column; gap: 3px; box-sizing: border-box; background: #333; border-right: 2px solid #333; }
                dock-head { margin-bottom: -3px; }
            </style>
            <menu-bar></menu-bar>
            <options-bar></options-bar>
            <main>
                <tool-dock></tool-dock>
                <work-area></work-area>
                <icon-dock></icon-dock>
                <aside>
                    <dock-head end></dock-head>
                    <color-panel></color-panel>
                    <adjust-panel></adjust-panel>
                    <layers-panel></layers-panel>
                </aside>
            </main>`;
    }
}
customElements.define("photo-app", PhotoApp);
</script>
</body>
</html>
